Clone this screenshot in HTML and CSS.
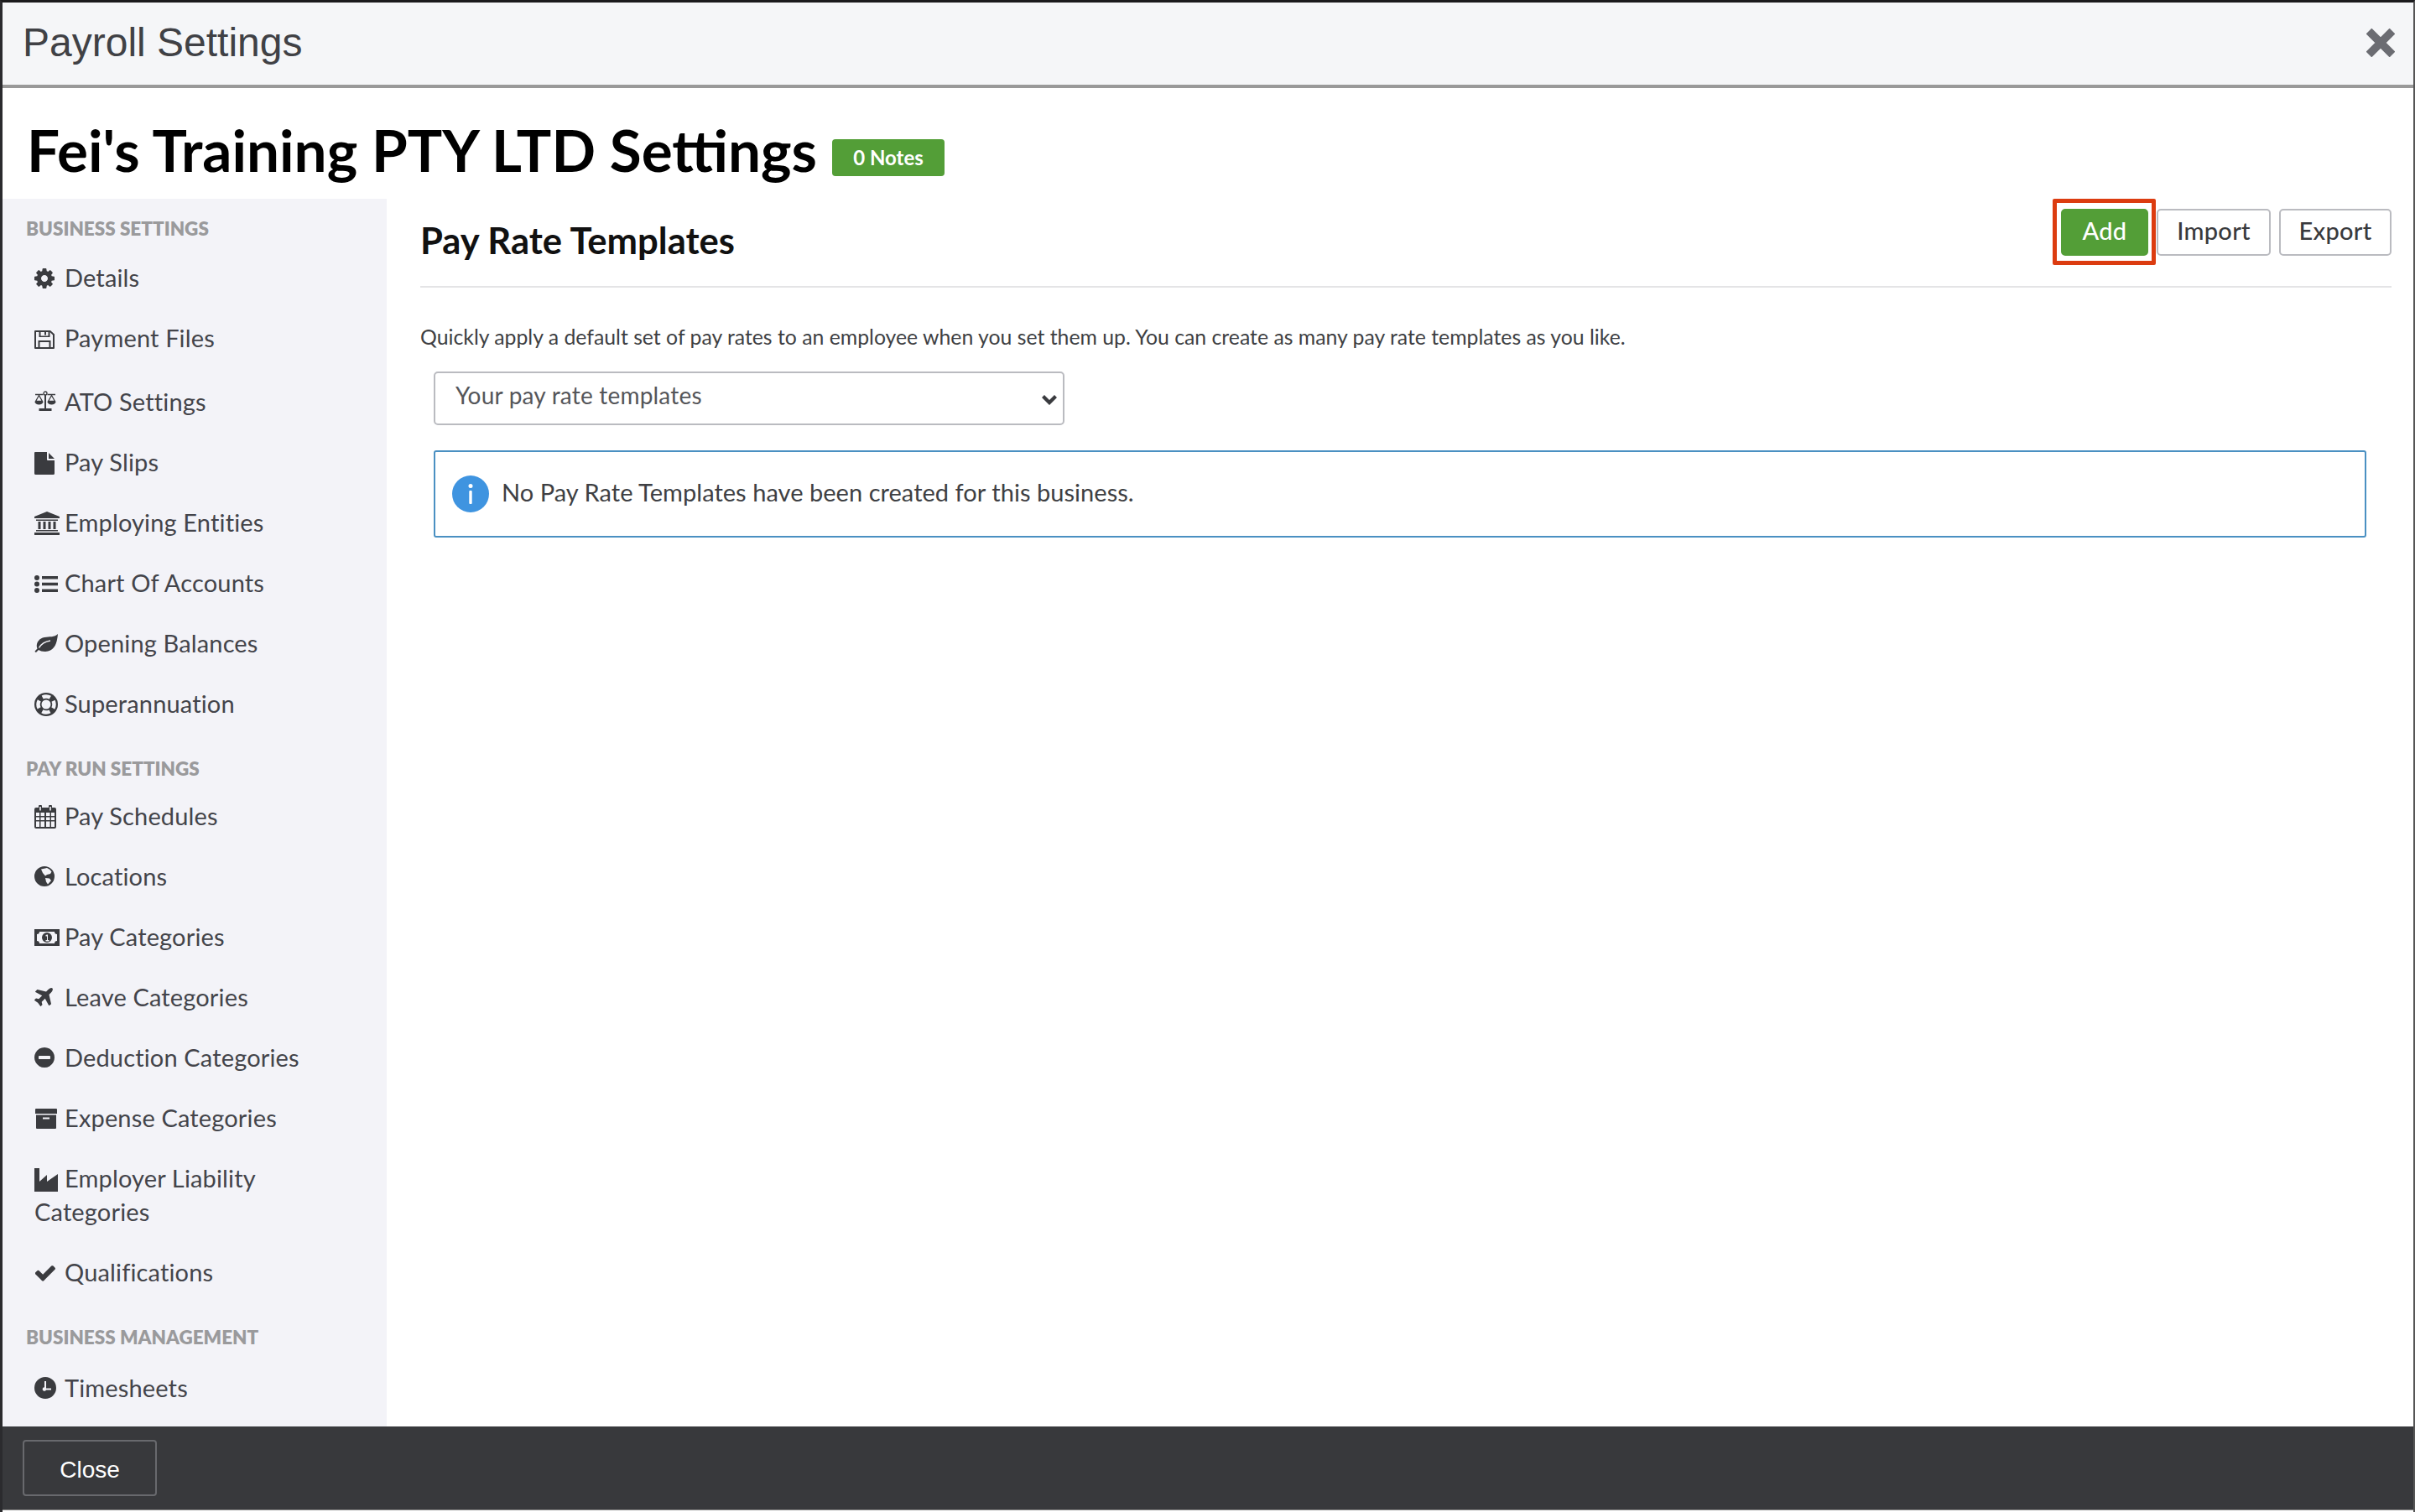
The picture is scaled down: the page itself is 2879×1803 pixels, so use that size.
FILE: index.html
```html
<!DOCTYPE html>
<html lang="en">
<head>
<meta charset="utf-8">
<title>Payroll Settings</title>
<link rel="stylesheet" href="styles.css">
</head>
<body>
<div class="window">
  <header class="topbar">
    <h1 class="topbar-title">Payroll Settings</h1>
    <svg class="close-x" viewBox="0 0 34 34"><path d="M3 3 31 31M31 3 3 31"/></svg>
  </header>
  <div class="title-row">
    <h2 class="biz-title">Fei's Training PTY LTD Settings</h2>
    <span class="badge">0 Notes</span>
  </div>
  <div class="main">
    <nav class="sidebar">
      <h3 class="nav-head">BUSINESS SETTINGS</h3>
      <a class="nav-item"><span class="ic"><svg class="i-gear" viewBox="128 128 1536 1536"><path d="M1152 896q0-106-75-181t-181-75-181 75-75 181 75 181 181 75 181-75 75-181zm512-109v222q0 12-8 23t-20 13l-185 28q-19 54-39 91 35 50 107 138 10 12 10 25t-9 23q-27 37-99 108t-94 71q-12 0-26-9l-138-108q-44 23-91 38-16 136-29 186-7 28-36 28h-222q-14 0-24.500-8.500t-11.500-21.500l-28-184q-49-16-90-37l-141 107q-10 9-25 9-14 0-25-11-126-114-165-168-7-10-7-23 0-12 8-23 15-21 51-66.500t54-70.500q-27-50-41-99l-183-27q-13-2-21-12.500t-8-23.500v-222q0-12 8-23t19-13l186-28q14-46 39-92-40-57-107-138-10-12-10-24 0-10 9-23 26-36 98.500-107.500t94.500-71.500q13 0 26 10l138 107q44-23 91-38 16-136 29-186 7-28 36-28h222q14 0 24.500 8.500t11.500 21.500l28 184q49 16 90 37l142-107q9-9 24-9 13 0 25 10 129 119 165 170 7 8 7 22 0 12-8 23-15 21-51 66.500t-54 70.500q26 50 41 98l183 28q13 2 21 12.500t8 23.500z"/></svg></span>Details</a>
      <a class="nav-item"><span class="ic"><svg class="i-save" viewBox="0 0 24 22"><path fill-rule="evenodd" d="M1 0h18l5 4.500V21a1 1 0 0 1-1 1H1a1 1 0 0 1-1-1V1a1 1 0 0 1 1-1zm1 2v18h2.500v-8h15v8H22V5.500L18.500 2v6h-13V2zm5.500 0v4.500h9V2h-2.500v3.500H12V2zM6.500 14v6h11v-6z"/></svg></span>Payment Files</a>
      <a class="nav-item nudge"><span class="ic"><svg class="i-scale" viewBox="0 0 26 24"><g class="line"><path d="M1 4.500h9.500M15.500 4.500H25M5.500 5.500 1.500 12.500h8zM20.500 5.500l-4 7h8z"/><circle cx="13" cy="3" r="2"/></g><path d="M12 5h2v16h-2zM5.500 21h15v3h-15zM.5 13h10a5 3.500 0 0 1-10 0zm15 0h10a5 3.500 0 0 1-10 0z"/></svg></span>ATO Settings</a>
      <a class="nav-item"><span class="ic"><svg class="i-file" viewBox="0 0 24 27"><path d="M1 0h14v9a1 1 0 0 0 1 1h8v15.500a1.500 1.500 0 0 1-1.500 1.500H1.500A1.500 1.500 0 0 1 0 25.500V1a1 1 0 0 1 1-1zm16 1 7 7h-7z"/></svg></span>Pay Slips</a>
      <a class="nav-item"><span class="ic"><svg class="i-bank" viewBox="0 0 30 28"><path d="M15 0 30 6v2H0V6zM2 9.500h26V11H2zM4.500 12h3v9h-3zm6 0h3v9h-3zm6 0h3v9h-3zm6 0h3v9h-3zM2 22h26v1.500H2zM0 25h30v3H0z"/></svg></span>Employing Entities</a>
      <a class="nav-item"><span class="ic"><svg class="i-list" viewBox="0 0 28 21"><circle cx="3" cy="3" r="3"/><circle cx="3" cy="10.500" r="3"/><circle cx="3" cy="18" r="3"/><path d="M9 1h19v3.500H9zm0 7.800h19v3.500H9zm0 7.700h19V20H9z"/></svg></span>Chart Of Accounts</a>
      <a class="nav-item"><span class="ic"><svg class="i-leaf" viewBox="0 0 28 22"><path d="M28 0C27 10 25 20 13 21 9 21 7 20 5 19L2.500 21.500C1.500 22.500 0 21 1 20L3.500 17.500C1 12 5 5 12 4 18 3 24 4 28 0z"/><path class="vein" d="M5.500 16.500C8 12 13 9 19 8"/></svg></span>Opening Balances</a>
      <a class="nav-item"><span class="ic"><svg class="i-ring" viewBox="0 0 28 28"><circle cx="14" cy="14" r="14"/><circle class="bg" cx="14" cy="14" r="5.500"/><circle class="window-arc" cx="14" cy="14" r="9.500"/></svg></span>Superannuation</a>

      <h3 class="nav-head spaced">PAY RUN SETTINGS</h3>
      <a class="nav-item"><span class="ic"><svg class="i-cal" viewBox="0 0 26 28"><path fill-rule="evenodd" d="M5 2V1.500a1.500 1.500 0 0 1 4 0V3h8V1.500a1.500 1.500 0 0 1 4 0V3h3a2 2 0 0 1 2 2v21a2 2 0 0 1-2 2H2a2 2 0 0 1-2-2V5a2 2 0 0 1 2-2h3zM6.200 2v4.500h1.600V2zm12 0v4.500h1.600V2zM2 9v4h4V9zm5.500 0v4H12V9zM14 9v4h4.500V9zM20 9v4h4V9zM2 14.500V18h4v-3.500zm5.500 0V18H12v-3.500zm6.500 0V18h4.500v-3.500zm6 0V18h4v-3.500zM2 19.500V26h4v-6.500zm5.500 0V26H12v-6.500zm6.500 0V26h4.500v-6.500zm6 0V26h4v-6.500z"/></svg></span>Pay Schedules</a>
      <a class="nav-item"><span class="ic"><svg class="i-globe" viewBox="0 0 24 24"><path fill-rule="evenodd" d="M12 0a12 12 0 1 1 0 24 12 12 0 0 1 0-24zM8 3.500 10 8l3 3.500 2-1.500 4-1 1.500-2.500A10 10 0 0 0 15 2zM13 14l5 .5 2 2.500-4 4.500-2-3z"/></svg></span>Locations</a>
      <a class="nav-item"><span class="ic"><svg class="i-money" viewBox="0 0 30 20"><path fill-rule="evenodd" d="M0 0h30v20H0zM6 3a3 3 0 0 1-3 3v8a3 3 0 0 1 3 3h18a3 3 0 0 1 3-3V6a3 3 0 0 1-3-3zm9 1a6 6 0 1 1 0 12 6 6 0 0 1 0-12zM13.500 7v1.500H15V13h-1.500v1.500h4V13H16V6.500h-1z"/></svg></span>Pay Categories</a>
      <a class="nav-item"><span class="ic"><svg class="i-plane" viewBox="0 128 1408 1408"><path d="M1376 160q44 52 12 148t-108 172l-161 161 160 696q5 19-12 33l-128 96q-7 6-19 6-4 0-7-1-15-3-21-16l-279-508-259 259 53 194q5 17-8 31l-96 96q-9 9-23 9h-2q-15-2-24-13l-189-252-252-189q-11-7-13-23-1-13 9-25l96-97q9-9 23-9 6 0 8 1l194 53 259-259-508-279q-14-8-17-24-2-16 9-27l128-128q14-13 30-8l665 159 160-160q76-76 172-108t148 12z"/></svg></span>Leave Categories</a>
      <a class="nav-item"><span class="ic"><svg class="i-minus" viewBox="0 128 1536 1536"><path d="M1216 960v-128q0-26-19-45t-45-19h-768q-26 0-45 19t-19 45v128q0 26 19 45t45 19h768q26 0 45-19t19-45zm320-64q0 209-103 385.500t-279.500 279.500-385.500 103-385.500-103-279.500-279.500-103-385.500 103-385.500 279.500-279.500 385.500-103 385.500 103 279.500 279.500 103 385.500z"/></svg></span>Deduction Categories</a>
      <a class="nav-item"><span class="ic ic-in"><svg class="i-box" viewBox="0 0 26 24"><path fill-rule="evenodd" d="M0 1a1 1 0 0 1 1-1h24a1 1 0 0 1 1 1v5H0zM1 7.500h24V23a1 1 0 0 1-1 1H2a1 1 0 0 1-1-1zm8 3v2h8v-2z"/></svg></span>Expense Categories</a>
      <a class="nav-item"><span class="ic"><svg class="i-factory" viewBox="0 0 28 28"><path d="M0 0h6v16L15 8v8L28 7v21H0z"/></svg></span>Employer Liability Categories</a>
      <a class="nav-item"><span class="ic ic-in"><svg class="i-check" viewBox="128 384 1543 1100"><path d="M1671 566q0 40-28 68l-724 724-136 136q-28 28-68 28t-68-28l-136-136-362-362q-28-28-28-68t28-68l136-136q28-28 68-28t68 28l294 295 656-657q28-28 68-28t68 28l136 136q28 28 28 68z"/></svg></span>Qualifications</a>

      <h3 class="nav-head spaced-b">BUSINESS MANAGEMENT</h3>
      <a class="nav-item nudge"><span class="ic"><svg class="i-clock" viewBox="0 0 26 26"><path fill-rule="evenodd" d="M13 0a13 13 0 1 1 0 26 13 13 0 0 1 0-26zm-1 5v7.200a2.300 2.300 0 1 0 2 3.300h6V13.500h-6V5z"/></svg></span>Timesheets</a>
    </nav>
    <section class="content">
      <div class="content-head">
        <h2 class="content-title">Pay Rate Templates</h2>
        <div class="actions">
          <span class="highlighted"><button class="btn btn-add">Add</button></span>
          <button class="btn btn-import">Import</button>
          <button class="btn btn-export">Export</button>
        </div>
      </div>
      <p class="intro">Quickly apply a default set of pay rates to an employee when you set them up. You can create as many pay rate templates as you like.</p>
      <div class="select-wrap">
        <select class="select"><option>Your pay rate templates</option></select>
        <svg class="chev" viewBox="0 0 18 12"><path d="M0 3l3-3 6 6 6-6 3 3-9 9z"/></svg>
      </div>
      <div class="alert">
        <svg class="info" viewBox="0 0 44 44"><circle cx="22" cy="22" r="22"/><circle class="info-mark" cx="22" cy="12.500" r="2.500"/><rect class="info-mark" x="20.300" y="18" width="3.400" height="16" rx="1"/></svg>
        <span class="alert-text">No Pay Rate Templates have been created for this business.</span>
      </div>
    </section>
  </div>
  <footer class="footer"><button class="close-btn">Close</button></footer>
</div>
</body>
</html>
```
FILE: styles.css
```css
* { box-sizing: border-box; }
html, body { margin: 0; padding: 0; background: #fff; }
body { width: 2879px; height: 1803px; overflow: hidden; font-family: "Lato", "Liberation Sans", sans-serif; color: #3a3b3f; }
.window { height: 1803px; display: flex; flex-direction: column; border-top: 3px solid #1b1b1d; border-left: 3px solid #2b2b2e; border-right: 2px solid #555; padding-bottom: 2px; background: #fff; }
.topbar { height: 102px; flex: none; background: #f5f6f8; border-bottom: 4px solid #999; display: flex; align-items: center; justify-content: space-between; padding: 0 22px 2px 24px; }
.topbar-title { margin: 0; font: 400 48px/56px "Liberation Sans", sans-serif; color: #404145; }
.close-x { width: 34px; height: 34px; fill: none; stroke: #6b6c72; stroke-width: 9.5px; }
.title-row { height: 132px; flex: none; display: flex; align-items: center; padding: 16px 0 0 29px; gap: 18px; }
.biz-title { margin: 0; font-weight: 700; font-size: 69.200px; line-height: 84px; color: #000; }
.badge { background: #539e37; color: #fff; font-size: 24px; font-weight: 700; height: 44px; width: 134px; border-radius: 4px; display: flex; align-items: center; justify-content: center; margin-top: 17px; }
.main { flex: 1; display: flex; min-height: 0; }
.sidebar { width: 458px; flex: none; background: #f3f3f8; padding: 23px 30px 0 28px; overflow: hidden; }
.nav-head { margin: 0 0 9px; font-size: 22.500px; line-height: 26px; font-weight: 800; color: #9a9a9c; }
.nav-head.spaced { margin: 29px 0 7px; }
.nav-head.spaced-b { margin: 29px 0 11px; }
.nav-item { display: block; padding: 16px 0 16px 10px; font-size: 29px; line-height: 40px; color: #43444a; letter-spacing: .15px; }
.nav-item.nudge { margin-top: 4px; }
.ic { display: inline-block; width: 36px; }
.ic-in { padding-left: 1px; }
.ic svg { display: inline-block; fill: #3a3b3f; }
.ic .bg, .ic .vein { fill: none; }
.ic .bg { fill: #f3f3f8; }
.ic .vein { stroke: #f3f3f8; stroke-width: 1.5px; }
.ic .line { fill: none; stroke: #3a3b3f; stroke-width: 1.3px; }
.ic .window-arc { fill: none; stroke: #f3f3f8; stroke-width: 4.5px; stroke-dasharray: 9.5 5.42; stroke-dashoffset: 4.75; }
.i-gear { width: 24px; height: 24px; vertical-align: -2px; }
.i-save { width: 24px; height: 22px; vertical-align: -2px; }
.i-scale { width: 26px; height: 24px; vertical-align: 0; }
.i-file { width: 24px; height: 27px; vertical-align: -4px; }
.i-bank { width: 30px; height: 28px; vertical-align: -4px; }
.i-list { width: 28px; height: 21px; vertical-align: -1px; }
.i-leaf { width: 28px; height: 22px; vertical-align: 0; }
.i-ring { width: 28px; height: 28px; vertical-align: -4px; }
.i-cal { width: 26px; height: 28px; vertical-align: -4px; }
.i-globe { width: 24px; height: 24px; vertical-align: -1px; }
.i-money { width: 30px; height: 20px; vertical-align: 0; }
.i-plane { width: 22px; height: 22px; vertical-align: 0; }
.i-minus { width: 24px; height: 24px; vertical-align: -1px; }
.i-box { width: 26px; height: 24px; vertical-align: -2px; }
.i-factory { width: 28px; height: 28px; vertical-align: -5px; }
.i-check { width: 24px; height: 19px; vertical-align: 0; }
.i-clock { width: 26px; height: 26px; vertical-align: -2px; }
.content { flex: 1; padding: 0 26px 0 40px; }
.content-head { height: 106px; display: flex; justify-content: space-between; border-bottom: 2px solid #e4e4e6; padding-top: 12px; }
.content-title { margin: 0; font-size: 43.600px; font-weight: 700; line-height: 52px; padding-top: 11px; color: #111; }
.actions { display: flex; gap: 10px; height: 56px; }
.highlighted { position: relative; display: block; }
.highlighted::after { content: ""; position: absolute; left: -10px; right: -9px; top: -12px; bottom: -11px; border: 5px solid #dc3c10; border-radius: 2px; }
.btn { display: block; height: 56px; padding: 0 0 6px; background: #fff; border: 2px solid #babbc0; border-radius: 5px; font-family: "Lato", sans-serif; font-size: 29px; font-weight: 500; color: #393a3d; letter-spacing: .3px; }
.btn-add { width: 104px; background: #539e37; border-color: #539e37; color: #fff; }
.btn-import { width: 136px; }
.btn-export { width: 134px; }
.intro { margin: 0; padding-top: 43px; font-size: 24.800px; line-height: 32px; color: #3e3f43; }
.select-wrap { position: relative; width: 752px; margin: 25px 0 0 16px; }
.select { display: block; width: 100%; height: 64px; appearance: none; -webkit-appearance: none; background: #fff; border: 2px solid #babbc0; border-radius: 5px; padding: 0 24px 8px; font-family: "Lato", sans-serif; font-size: 28px; color: #55565a; letter-spacing: .2px; }
.chev { position: absolute; right: 9px; top: 28px; width: 18px; height: 12px; fill: #3a3b3f; }
.alert { margin: 30px 30px 0 16px; height: 104px; border: 2px solid #4a90c2; border-radius: 3px; display: flex; align-items: center; gap: 15px; padding: 0 0 0 20px; font-size: 29px; color: #3e3f43; letter-spacing: .04px; }
.alert-text { padding-bottom: 6px; }
.info { width: 44px; height: 44px; fill: #3f94e0; }
.info-mark { fill: #fff; }
.footer { height: 100px; flex: none; background: #38393c; border-bottom: 1px solid #8a8a8a; padding: 16px 0 0 24px; }
.close-btn { width: 160px; height: 67px; background: transparent; border: 2px solid #68696d; border-radius: 4px; color: #fff; font: 400 28px "Liberation Sans", sans-serif; padding-top: 6px; }
```
